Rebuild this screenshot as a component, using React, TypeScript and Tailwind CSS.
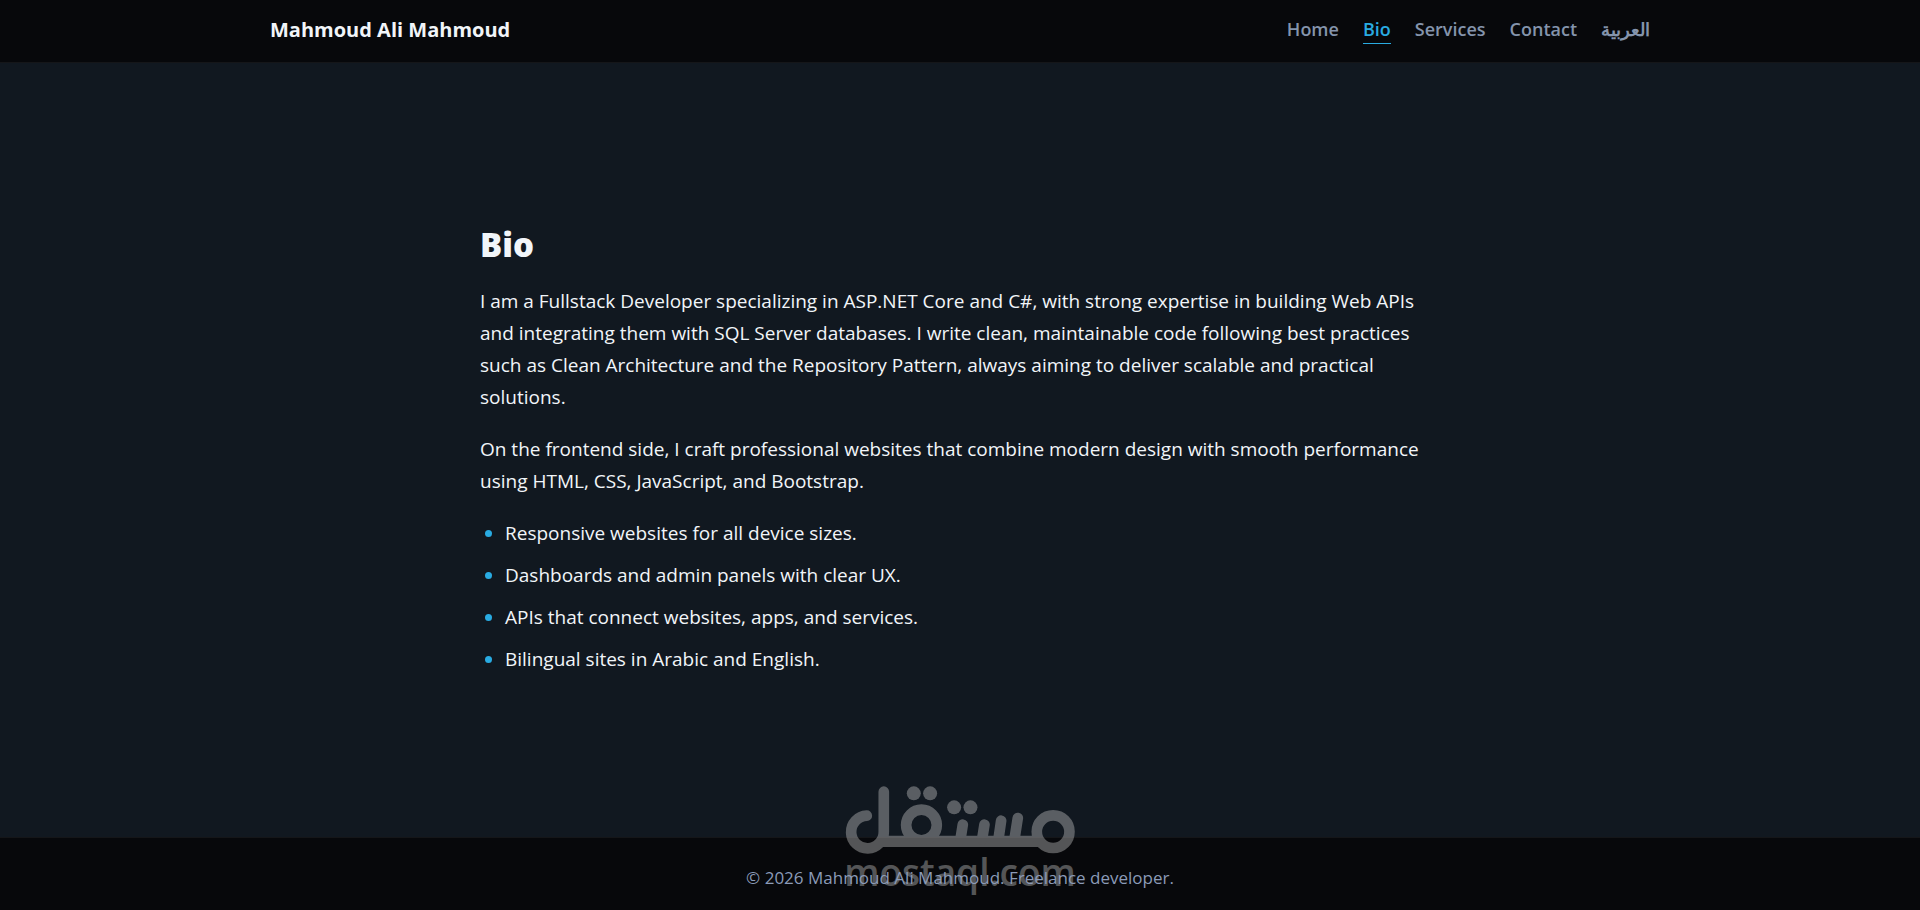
const navLinks = [
  { label: "Home", href: "#home" },
  { label: "Bio", href: "#bio", active: true },
  { label: "Services", href: "#services" },
  { label: "Contact", href: "#contact" },
  { label: "العربية", href: "#ar", lang: "ar" },
];

const highlights = [
  "Responsive websites for all device sizes.",
  "Dashboards and admin panels with clear UX.",
  "APIs that connect websites, apps, and services.",
  "Bilingual sites in Arabic and English.",
];

function Watermark() {
  return (
    <div className="pointer-events-none absolute bottom-5 left-1/2 flex -translate-x-1/2 flex-col items-center text-[#c8c8c8] opacity-40">
      <svg viewBox="0 0 690 204" className="h-[68px] w-[230px]" fill="none" stroke="currentColor" strokeWidth="32" strokeLinecap="round">
        <path d="M65 89 A49 49 0 1 0 116 137 V17" />
        <path d="M100 166 H586" strokeWidth="34" strokeLinecap="butt" />
        <circle cx="229" cy="117" r="46" />
        <circle cx="624" cy="137" r="49" />
        <path d="M353 116 L346 160 M418 116 L411 160 M468 104 L460 160 M518 96 L508 160" />
        <g fill="currentColor" stroke="none">
          <circle cx="206" cy="22" r="21" />
          <circle cx="255" cy="22" r="21" />
          <circle cx="327" cy="64" r="21" />
          <circle cx="376" cy="64" r="21" />
        </g>
      </svg>
      <span className="text-[37px] leading-9 font-semibold">mostaql.com</span>
    </div>
  );
}

export default function App() {
  return (
    <div className="flex min-h-screen flex-col bg-[#111820] font-['Open_Sans','Noto_Sans',sans-serif] text-[#f1f5f9]">
      <header className="border-b border-white/6 bg-[#07080b]">
        <div className="mx-auto flex max-w-[1380px] items-start justify-between pt-3 pb-[14px]">
          <a href="#home" className="text-xl leading-9 font-bold">
            Mahmoud Ali Mahmoud
          </a>
          <nav className="flex gap-6 pt-1">
            {navLinks.map((link) => (
              <a
                key={link.label}
                href={link.href}
                lang={link.lang}
                className={`border-b text-lg leading-[27px] font-semibold ${
                  link.active ? "border-[#29abe2] text-[#29abe2]" : "border-transparent text-[#8494ac]"
                }`}
              >
                {link.label}
              </a>
            ))}
          </nav>
        </div>
      </header>

      <main className="flex flex-1 flex-col justify-center">
        <section id="bio" className="mx-auto w-full max-w-[960px] text-[19px] leading-8">
          <h1 className="mb-5 text-[33px] leading-10 font-extrabold">Bio</h1>
          <p className="mb-5">
            I am a Fullstack Developer specializing in ASP.NET Core and C#, with strong expertise in building Web APIs
            and integrating them with SQL Server databases. I write clean, maintainable code following best practices
            such as Clean Architecture and the Repository Pattern, always aiming to deliver scalable and practical
            solutions.
          </p>
          <p className="mb-5">
            On the frontend side, I craft professional websites that combine modern design with smooth performance
            using HTML, CSS, JavaScript, and Bootstrap.
          </p>
          <ul className="flex list-disc flex-col gap-[10px] pl-[25px] marker:text-[#29abe2]">
            {highlights.map((item) => (
              <li key={item}>{item}</li>
            ))}
          </ul>
        </section>
      </main>

      <footer className="relative border-t border-white/6 bg-[#07080b] pt-7 pb-5 text-center">
        <Watermark />
        <p className="relative text-[17px] leading-6 text-[#8b9bb8]">© 2026 Mahmoud Ali Mahmoud. Freelance developer.</p>
      </footer>
    </div>
  );
}
